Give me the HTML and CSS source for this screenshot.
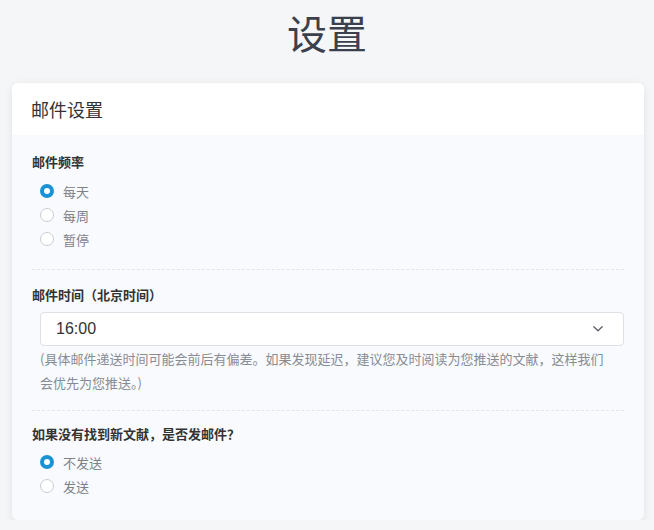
FILE: index.html
```html
<!DOCTYPE html>
<html lang="zh-CN">
<head>
<meta charset="utf-8">
<title>设置</title>
<link rel="stylesheet" href="styles.css">
</head>
<body>
<h1 class="page-title">设置</h1>
<div class="card">
  <div class="card-header">邮件设置</div>
  <div class="card-body">
    <div class="section first">
      <div class="field-label">邮件频率</div>
      <div class="radio-group">
        <label class="radio checked"><span class="dot"></span><span class="radio-text">每天</span></label>
        <label class="radio"><span class="dot"></span><span class="radio-text">每周</span></label>
        <label class="radio"><span class="dot"></span><span class="radio-text">暂停</span></label>
      </div>
    </div>
    <div class="section">
      <div class="field-label">邮件时间（北京时间）</div>
      <div class="select">
        <span class="select-value">16:00</span>
        <svg class="chevron" width="12" height="8" viewBox="0 0 12 8"><path d="M1.8 1.8 L6 5.8 L10.2 1.8" fill="none" stroke="#5a5f66" stroke-width="1.3" stroke-linecap="round" stroke-linejoin="round"/></svg>
      </div>
      <p class="help">(具体邮件递送时间可能会前后有偏差。如果发现延迟，建议您及时阅读为您推送的文献，这样我们会优先为您推送。)</p>
    </div>
    <div class="section last">
      <div class="field-label">如果没有找到新文献，是否发邮件？</div>
      <div class="radio-group">
        <label class="radio checked"><span class="dot"></span><span class="radio-text">不发送</span></label>
        <label class="radio"><span class="dot"></span><span class="radio-text">发送</span></label>
      </div>
    </div>
  </div>
</div>
</body>
</html>
```
FILE: styles.css
```css
html, body {
  margin: 0;
  padding: 0;
}
body {
  background: #f5f6f8;
  font-family: "Liberation Sans", "Noto Sans CJK SC", sans-serif;
  color: #333;
}
.page-title {
  margin: 0;
  height: 64px;
  line-height: 64px;
  text-align: center;
  font-size: 40px;
  font-weight: 400;
  color: #3b414c;
  font-family: "Noto Sans CJK SC", sans-serif;
}
.card {
  margin: 19px 10px 0 12px;
  border-radius: 6px;
  overflow: hidden;
  background: #f8fafd;
  box-shadow: 0 2px 8px rgba(0, 0, 0, 0.09);
}
.card-header {
  background: #fff;
  height: 52px;
  line-height: 52px;
  padding-left: 19px;
  font-size: 18px;
  color: #333;
  font-family: "Noto Sans CJK SC", sans-serif;
}
.card-body {
  padding: 0 20px;
}
.section {
  padding: 15px 0 15px;
  border-bottom: 1px dashed #e2e5ea;
}
.section.first {
  padding-top: 17px;
  padding-bottom: 18px;
}
.section.last {
  border-bottom: none;
  padding-top: 13px;
  padding-bottom: 22px;
}
.field-label {
  font-family: "Noto Sans CJK SC", sans-serif;
  font-size: 13px;
  font-weight: 700;
  line-height: 20px;
  color: #333;
  margin-bottom: 7px;
}
.section.last .field-label {
  margin-bottom: 6px;
}
.radio-group {
  display: flex;
  flex-direction: column;
  padding-left: 8px;
}
.radio {
  display: flex;
  align-items: center;
  height: 24px;
  gap: 9px;
}
.dot {
  box-sizing: border-box;
  width: 14px;
  height: 14px;
  border-radius: 50%;
  border: 1px solid #c9cdd3;
  background: #fff;
}
.radio.checked .dot {
  border: 4px solid #1a93d6;
}
.radio-text {
  font-family: "Noto Sans CJK SC", sans-serif;
  font-size: 13px;
  color: #7d828a;
}
.select {
  margin: 5px 0 0 8px;
  box-sizing: border-box;
  height: 34px;
  background: #fff;
  border: 1px solid #dde0e5;
  border-radius: 4px;
  display: flex;
  align-items: center;
  justify-content: space-between;
  padding: 0 19px 0 15px;
}
.select-value {
  font-size: 16px;
  color: #333;
}
.chevron {
  display: block;
}
.help {
  margin: 1px 16px 0 8px;
  font-family: "Noto Sans CJK SC", sans-serif;
  font-size: 13px;
  line-height: 24px;
  color: #878c94;
}
```
